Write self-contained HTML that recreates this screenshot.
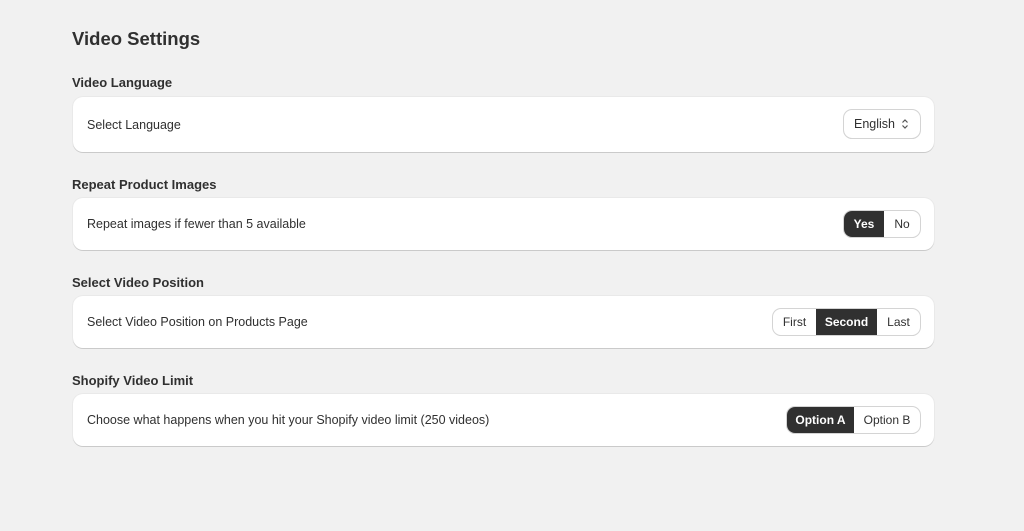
<!DOCTYPE html>
<html><head><style>
*{box-sizing:border-box;margin:0;padding:0}
body{width:1024px;height:531px;background:#f1f1f1;font-family:"Liberation Sans",sans-serif;color:#303030;position:relative;overflow:hidden}
.h1{position:absolute;left:72px;top:28px;font-size:18.5px;font-weight:bold;color:#303030}
.lbl{position:absolute;left:72px;font-size:13px;font-weight:bold;color:#303030}
.card{position:absolute;left:73px;width:861px;background:#fff;border-radius:10px;box-shadow:0 1px 0 rgba(0,0,0,.13),0 0 0 1px rgba(0,0,0,.03)}
.card .t{position:absolute;left:14px;top:50%;transform:translateY(-50%);font-size:12.5px;color:#303030}
.grp{position:absolute;display:flex;height:26px;border-radius:8px;box-shadow:0 0 0 1px #d4d4d4,0 1px 0 #c8c8c8;overflow:hidden;font-size:12px;background:#fff}
.grp div{display:flex;align-items:center;justify-content:center;color:#303030}
.grp .on{background:#303030;color:#fff;font-weight:bold}
.sel{position:absolute;left:771px;top:13px;width:76px;height:28px;border-radius:8px;box-shadow:0 0 0 1px #d4d4d4,0 1px 0 #c8c8c8;font-size:12.5px;padding-left:10px;line-height:28px}
</style></head><body>
<div class="h1">Video Settings</div>
<div class="lbl" style="top:75px">Video Language</div>
<div class="card" style="top:97px;height:55px"><div class="t">Select Language</div>
<div class="sel">English<svg style="position:absolute;left:57px;top:8px" width="8" height="12" viewBox="0 0 8 12"><path d="M1.5 4.5L4 2l2.5 2.5M1.5 7.5L4 10l2.5-2.5" fill="none" stroke="#555" stroke-width="1.2"/></svg></div></div>
<div class="lbl" style="top:177px">Repeat Product Images</div>
<div class="card" style="top:198px;height:52px"><div class="t">Repeat images if fewer than 5 available</div>
<div class="grp" style="left:771px;top:13px;width:76px"><div class="on" style="width:40px">Yes</div><div style="width:36px">No</div></div></div>
<div class="lbl" style="top:275px">Select Video Position</div>
<div class="card" style="top:296px;height:52px"><div class="t">Select Video Position on Products Page</div>
<div class="grp" style="left:700px;top:13px;width:147px"><div style="width:43px">First</div><div class="on" style="width:61px">Second</div><div style="width:43px">Last</div></div></div>
<div class="lbl" style="top:373px">Shopify Video Limit</div>
<div class="card" style="top:394px;height:52px"><div class="t">Choose what happens when you hit your Shopify video limit (250 videos)</div>
<div class="grp" style="left:714px;top:13px;width:133px"><div class="on" style="width:67px">Option A</div><div style="width:66px">Option B</div></div></div>
</body></html>
